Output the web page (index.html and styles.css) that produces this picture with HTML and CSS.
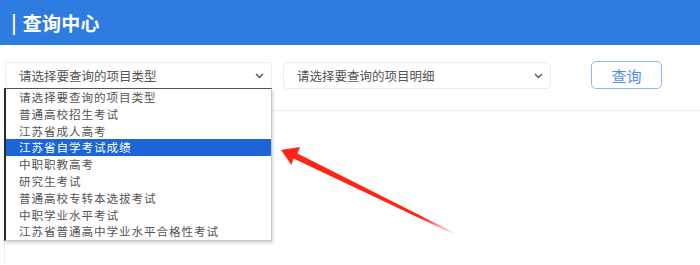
FILE: index.html
```html
<!DOCTYPE html>
<html lang="zh-CN">
<head>
<meta charset="utf-8">
<title>查询中心</title>
<link rel="stylesheet" href="styles.css">
</head>
<body>
<header class="header"><span class="bar">|</span><span class="title">查询中心</span></header>
<div class="toolbar">
  <div class="select select-type">
    <span class="select-text">请选择要查询的项目类型</span>
    <svg class="chev" width="9" height="6" viewBox="0 0 9 6"><path d="M1 1 L4.5 4.5 L8 1" fill="none" stroke="#555" stroke-width="1.4"/></svg>
  </div>
  <div class="select select-detail">
    <span class="select-text">请选择要查询的项目明细</span>
    <svg class="chev" width="9" height="6" viewBox="0 0 9 6"><path d="M1 1 L4.5 4.5 L8 1" fill="none" stroke="#555" stroke-width="1.4"/></svg>
  </div>
  <button class="btn">查询</button>
</div>
<div class="card"></div>
<ul class="dropdown">
  <li>请选择要查询的项目类型</li>
  <li>普通高校招生考试</li>
  <li>江苏省成人高考</li>
  <li class="active">江苏省自学考试成绩</li>
  <li>中职职教高考</li>
  <li>研究生考试</li>
  <li>普通高校专转本选拔考试</li>
  <li>中职学业水平考试</li>
  <li>江苏省普通高中学业水平合格性考试</li>
</ul>
<svg class="arrow" width="700" height="265" viewBox="0 0 700 265">
  <defs>
    <linearGradient id="fade" gradientUnits="userSpaceOnUse" x1="282" y1="150" x2="455" y2="234">
      <stop offset="0" stop-color="#ff2415"/>
      <stop offset="0.8" stop-color="#ff2415"/>
      <stop offset="1" stop-color="#ff2415" stop-opacity="0"/>
    </linearGradient>
  </defs>
  <polygon fill="url(#fade)" points="281,150 300,147 297.5,153.5 455,233 454,234.5 293.5,158.5 291.5,165"/>
</svg>
</body>
</html>
```
FILE: styles.css
```css
html, body {
  margin: 0;
  padding: 0;
  background: #fff;
  font-family: "Noto Sans CJK SC", "Noto Sans", sans-serif;
  width: 700px;
  height: 265px;
  overflow: hidden;
  position: relative;
}
.header {
  height: 45px;
  background: #2f7ce0;
  color: #fff;
  display: flex;
  align-items: center;
  padding-left: 11px;
  box-sizing: border-box;
  font-weight: bold;
  font-size: 19px;
}
.bar {
  font-family: "Liberation Sans", sans-serif;
  font-size: 22px;
  font-weight: normal;
  margin-right: 6px;
  line-height: 1;
}
.title { letter-spacing: 0.3px; }
.toolbar {
  display: flex;
  align-items: center;
  padding: 16px 0 0 5px;
  height: 28px;
}
.select {
  height: 27px;
  border: 1px solid #ececec;
  border-radius: 4px;
  box-sizing: border-box;
  display: flex;
  align-items: center;
  justify-content: space-between;
  padding: 0 7px 0 13px;
  color: #555;
  font-size: 12.5px;
}
.select-type { width: 267px; }
.select-detail { width: 268px; margin-left: 11px; }
.chev { margin-top: 1px; }
.btn {
  margin-left: 40px;
  width: 71px;
  height: 28px;
  border: 1px solid #8fb8f2;
  border-radius: 5px;
  background: #fff;
  color: #4c8de8;
  font-family: "Noto Sans CJK SC", sans-serif;
  font-size: 15px;
  padding: 0;
}
.card {
  margin: 21px 0 0 4px;
  height: 154px;
  box-sizing: border-box;
  border-top: 1px solid #eeeeee;
  border-left: 1px solid #eeeeee;
}
.dropdown {
  position: absolute;
  left: 4px;
  top: 88px;
  width: 268px;
  margin: 0;
  padding: 0;
  list-style: none;
  box-sizing: border-box;
  background: #fff;
  border-left: 2px solid #2a2a2a;
  border-top: 1px solid #555;
  border-right: 1px solid #c8c8c8;
  border-bottom: 1px solid #c8c8c8;
  box-shadow: 1px 2px 3px rgba(0,0,0,0.18);
  font-size: 11.6px;
  letter-spacing: 0.9px;
  color: #555;
}
.dropdown li {
  height: 16.8px;
  line-height: 16.8px;
  padding-left: 13px;
  white-space: nowrap;
  overflow: hidden;
}
.dropdown li.active {
  background: #1b66d4;
  color: #fff;
}
.arrow {
  position: absolute;
  left: 0;
  top: 0;
  pointer-events: none;
}
```
